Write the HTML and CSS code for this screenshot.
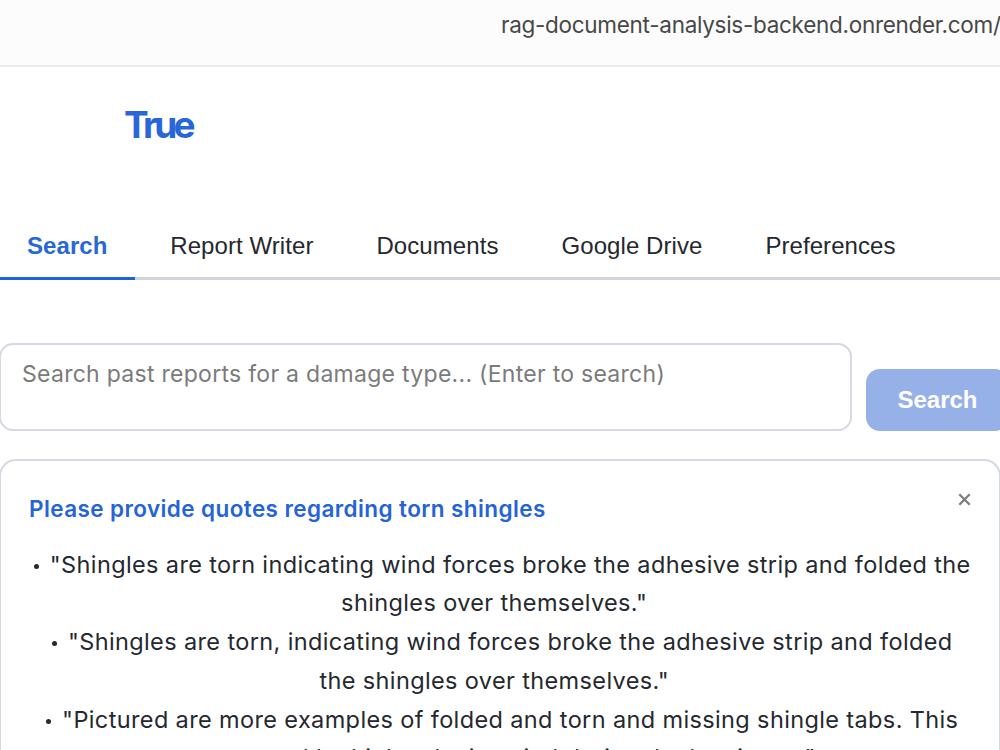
FILE: index.html
```html
<!DOCTYPE html>
<html lang="en">
<head>
<meta charset="utf-8">
<title>True</title>
<link rel="stylesheet" href="styles.css">
</head>
<body>
<div class="address-bar"><span class="url">rag-document-analysis-backend.onrender.com/</span></div>
<header class="header"><div class="logo">True</div></header>
<nav class="tabs">
  <a class="tab active">Search</a>
  <a class="tab writer">Report Writer</a>
  <a class="tab">Documents</a>
  <a class="tab">Google Drive</a>
  <a class="tab">Preferences</a>
</nav>
<main class="content">
  <div class="search-row">
    <div class="search-box"><span class="placeholder">Search past reports for a damage type... (Enter to search)</span></div>
    <button class="search-button">Search</button>
  </div>
  <section class="result">
    <div class="result-head">
      <h2 class="question">Please provide quotes regarding torn shingles</h2>
      <svg class="close" viewBox="0 0 12 12"><path d="M1.2 1.2 10.8 10.8M10.8 1.2 1.2 10.8"/></svg>
    </div>
    <div class="answer">
      <div class="line"><span><i class="dot"></i>"Shingles are torn indicating wind forces broke the adhesive strip and folded the</span></div>
      <div class="line wrapped"><span>shingles over themselves."</span></div>
      <div class="line"><span><i class="dot"></i>"Shingles are torn, indicating wind forces broke the adhesive strip and folded</span></div>
      <div class="line wrapped"><span>the shingles over themselves."</span></div>
      <div class="line"><span><i class="dot"></i>"Pictured are more examples of folded and torn and missing shingle tabs. This</span></div>
      <div class="line wrapped"><span>was caused by high velocity wind during the hurricane."</span></div>
    </div>
  </section>
</main>
</body>
</html>
```
FILE: styles.css
```css
* { box-sizing: border-box; }
body {
  display: flex;
  flex-direction: column;
  margin: 0;
  width: 1000px;
  height: 750px;
  overflow: hidden;
  background: #fff;
  color: #25282f;
  font-family: Inter, "Liberation Sans", sans-serif;
  white-space: nowrap;
}
.address-bar {
  height: 67px;
  flex: none;
  padding: 10px 0 0 501px;
  background: #fcfcfc;
  border-bottom: 2px solid #ececec;
  color: #484848;
  font-size: 22.5px;
  line-height: 30px;
  letter-spacing: -0.29px;
  overflow: hidden;
}
.header { height: 145px; flex: none; padding: 38px 0 0 124px; }
.logo {
  color: #2867d9;
  font-size: 37px;
  font-weight: 700;
  line-height: 40px;
  letter-spacing: -3.7px;
}
.tabs {
  display: flex;
  height: 68px;
  flex: none;
  border-bottom: 3px solid #d1d5db;
  font-family: "Liberation Sans", sans-serif;
  font-size: 24px;
  line-height: 28px;
}
.tab { height: 68px; padding: 20px 31.5px 0; letter-spacing: 0.07px; }
.active {
  width: 135px;
  padding-left: 27px;
  border-bottom: 3px solid #1d64dc;
  color: #2867d9;
  font-weight: 700;
}
.writer { padding-left: 35.3px; }
.content {
  display: flex;
  flex: 1;
  flex-direction: column;
  min-height: 0;
  margin-left: -1px;
  padding-top: 63px;
}
.search-row { display: flex; flex: none; align-items: flex-end; gap: 14px; }
.search-box {
  width: 853px;
  height: 88px;
  flex: none;
  padding: 14px 21px;
  border: 2px solid #d6d9e1;
  border-radius: 14px;
  color: #7b7b7b;
  font-size: 23px;
  line-height: 30px;
  letter-spacing: 0.28px;
}
.search-button {
  width: 143px;
  height: 62px;
  flex: none;
  padding: 0;
  border: 0;
  border-radius: 14px;
  background: #95b1e8;
  color: #fff;
  font: 700 24px "Liberation Sans", sans-serif;
}
.result {
  width: 1002px;
  flex: 1;
  min-height: 0;
  margin-top: 28px;
  padding: 32px 28px 0;
  border: 2px solid #d6d9e1;
  border-bottom: 0;
  border-radius: 17px 17px 0 0;
  overflow: hidden;
}
.result-head { display: flex; justify-content: space-between; align-items: flex-start; }
.question {
  margin: 0;
  color: #2563d9;
  font-size: 22.5px;
  font-weight: 600;
  line-height: 32px;
  letter-spacing: 0.4px;
}
.close {
  width: 13px;
  height: 13px;
  fill: none;
  stroke: #7c7c7c;
  stroke-width: 2.1;
}
.answer { margin: 20.5px -10px 0 -5.5px; font-size: 23.5px; letter-spacing: 0.37px; }
.line { display: flex; justify-content: center; height: 38.8px; line-height: 38.8px; }
.wrapped { padding-right: 16px; }
.dot {
  display: inline-block;
  width: 5px;
  height: 5px;
  margin-right: 11px;
  border-radius: 50%;
  background: #252830;
  vertical-align: 4px;
}
```
